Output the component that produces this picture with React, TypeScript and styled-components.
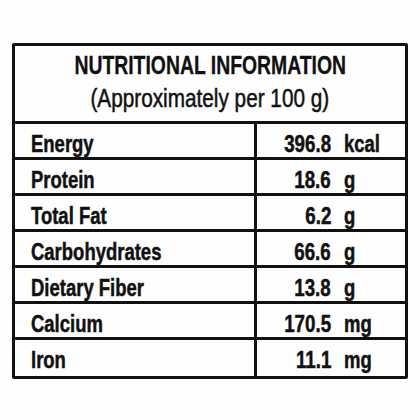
import React from "react";
import styled, { createGlobalStyle } from "styled-components";

const Global = createGlobalStyle`
  html, body {
    margin: 0;
    padding: 0;
    background: #fefefe;
  }
  body {
    font-family: "Liberation Sans", Arial, sans-serif;
    color: #111;
  }
`;

const Page = styled.div`
  width: 420px;
  height: 420px;
  padding: 43px 12px 0 12px;
  box-sizing: border-box;
`;

const Label = styled.div`
  width: 396px;
  border: 3px solid #111;
  border-radius: 2px;
  box-sizing: border-box;
`;

const Header = styled.div`
  height: 78px;
  display: flex;
  flex-direction: column;
  align-items: center;
  border-bottom: 3px solid #111;
  padding-top: 4px;
  box-sizing: border-box;
`;

// the print uses a narrow grotesque; squeeze the regular face to match
const Narrow = styled.span<{ $scale: number; $origin?: string }>`
  display: inline-block;
  white-space: pre;
  transform: scaleX(${p => p.$scale});
  transform-origin: ${p => p.$origin || "center"};
`;

const Title = styled.div`
  font-size: 25px;
  font-weight: bold;
  line-height: 30px;
  -webkit-text-stroke: 0.3px #111;
`;

const Subtitle = styled.div`
  margin-top: 2px;
  font-size: 25px;
  line-height: 32px;
  -webkit-text-stroke: 0.5px #111;
`;

const Row = styled.div<{ $last?: boolean }>`
  display: grid;
  grid-template-columns: 242px 1fr;
  height: 36px;
  border-bottom: ${p => (p.$last ? "none" : "3px solid #111")};
  box-sizing: border-box;
  font-size: 24px;
  font-weight: bold;
  line-height: 30px;
  -webkit-text-stroke: 0.5px #111;
`;

const Name = styled.div`
  border-right: 3px solid #111;
  padding: 5px 0 0 16px;
`;

const Value = styled.div`
  display: grid;
  grid-template-columns: 74px 1fr;
  column-gap: 13px;
  padding-top: 5px;
`;

const Amount = styled.div`
  text-align: right;
`;

const rows: [string, string, string][] = [
  ["Energy", "396.8", "kcal"],
  ["Protein", "18.6", "g"],
  ["Total Fat", "6.2", "g"],
  ["Carbohydrates", "66.6", "g"],
  ["Dietary Fiber", "13.8", "g"],
  ["Calcium", "170.5", "mg"],
  ["Iron", "11.1", "mg"],
];

export default function App() {
  return (
    <>
      <Global />
      <Page>
        <Label>
          <Header>
            <Title>
              <Narrow $scale={0.775}>NUTRITIONAL INFORMATION</Narrow>
            </Title>
            <Subtitle>
              <Narrow $scale={0.83}>(Approximately per 100 g)</Narrow>
            </Subtitle>
          </Header>
          {rows.map(([name, amount, unit], i) => (
            <Row key={name} $last={i === rows.length - 1}>
              <Name>
                <Narrow $scale={0.77} $origin="left">
                  {name}
                </Narrow>
              </Name>
              <Value>
                <Amount>
                  <Narrow $scale={0.78} $origin="right">
                    {amount}
                  </Narrow>
                </Amount>
                <div>
                  <Narrow $scale={0.77} $origin="left">
                    {unit}
                  </Narrow>
                </div>
              </Value>
            </Row>
          ))}
        </Label>
      </Page>
    </>
  );
}
